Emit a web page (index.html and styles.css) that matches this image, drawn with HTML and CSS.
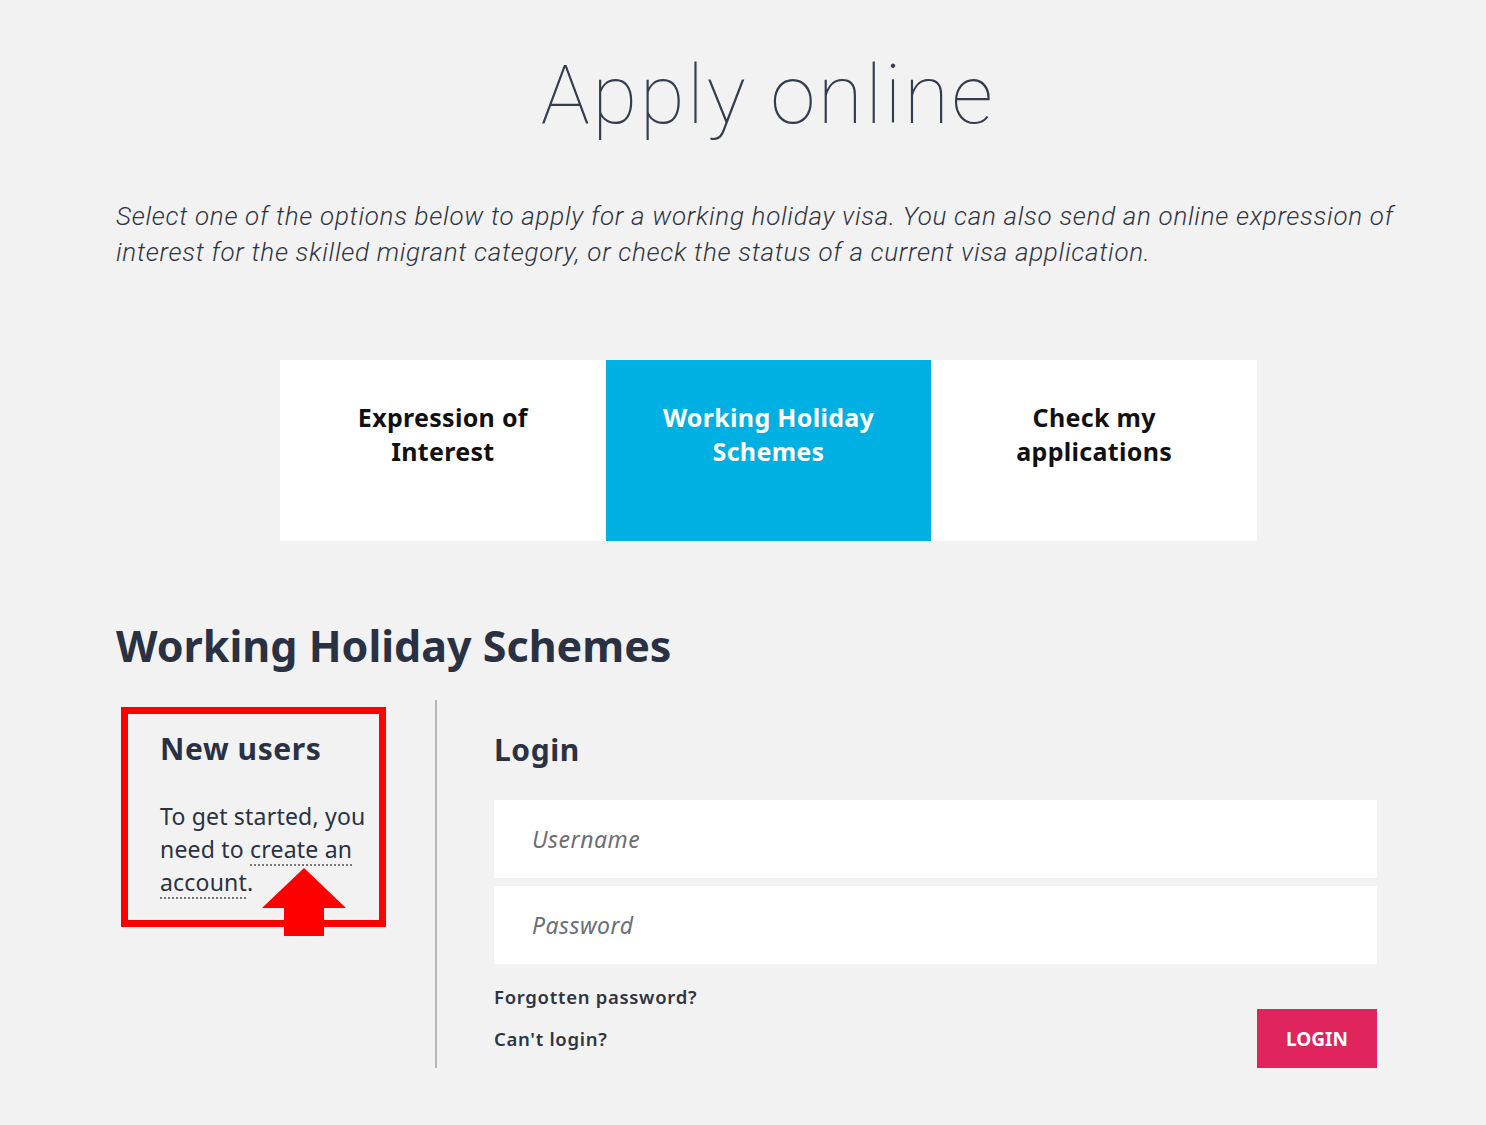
FILE: index.html
```html
<!DOCTYPE html>
<html lang="en">
<head>
<meta charset="utf-8">
<title>Apply online</title>
<link rel="stylesheet" href="styles.css">
</head>
<body>
<main class="page">
  <h1 class="title">Apply online</h1>
  <p class="intro">Select one of the options below to apply for a working holiday visa. You can also send an online expression of interest for the skilled migrant category, or check the status of a current visa application.</p>

  <nav class="tabs">
    <a class="tab">Expression of<br>Interest</a>
    <a class="tab tab-active">Working Holiday<br>Schemes</a>
    <a class="tab">Check my<br>applications</a>
  </nav>

  <h2 class="section-title">Working Holiday Schemes</h2>

  <section class="panels">
    <div class="new-col">
      <div class="new-box">
        <h3 class="sub sub-new">New users</h3>
        <p class="new-text">To get started, you need to <a class="dotted">create an account</a>.</p>
        <svg class="arrow" width="84" height="70" viewBox="0 0 84 70">
          <polygon points="42,0 84,40 62,40 62,68 22,68 22,40 0,40" fill="#ff0000"/>
        </svg>
      </div>
    </div>
    <div class="divider"></div>
    <div class="login-col">
      <h3 class="sub">Login</h3>
      <div class="field">Username</div>
      <div class="field">Password</div>
      <div class="login-bottom">
        <div class="links">
          <a class="link">Forgotten password?</a>
          <a class="link">Can't login?</a>
        </div>
        <button class="btn">LOGIN</button>
      </div>
    </div>
  </section>
</main>
</body>
</html>
```
FILE: styles.css
```css
html, body {
  margin: 0;
  padding: 0;
  background: #f2f2f2;
}
body {
  font-family: "Noto Sans", "Open Sans", sans-serif;
  color: #2a3142;
}
.page {
  width: 1280px;
  margin-left: 116px;
  padding-top: 40px;
}
.title {
  margin: 0 0 0 -66px;
  width: 1436px;
  text-align: center;
  font-family: "Roboto", sans-serif;
  font-weight: 100;
  font-size: 82px;
  line-height: 110px;
  color: #343c4e;
  letter-spacing: 2.5px;
}
.intro {
  margin: 48px 0 0 0;
  font-family: "Roboto", sans-serif;
  font-style: italic;
  font-weight: 300;
  font-size: 26px;
  line-height: 36px;
  letter-spacing: 0.7px;
  color: #2f3442;
  width: 1290px;
}
.tabs {
  display: flex;
  margin: 90px 0 0 164px;
  width: 977px;
  height: 181px;
}
.tab {
  flex: 1;
  background: #ffffff;
  text-align: center;
  font-weight: 700;
  font-size: 25px;
  line-height: 34px;
  letter-spacing: 0.3px;
  color: #111111;
  padding-top: 40px;
  box-sizing: border-box;
}
.tab-active {
  background: #00b0e2;
  color: #ffffff;
}
.section-title {
  margin: 79px 0 0 0;
  font-size: 43px;
  line-height: 52px;
  letter-spacing: 0;
  font-weight: 700;
  color: #2a3142;
}
.panels {
  display: flex;
  margin-top: 28px;
  height: 368px;
}
.new-col {
  width: 319px;
  padding-left: 5px;
  padding-top: 7px;
  box-sizing: border-box;
}
.new-box {
  position: relative;
  width: 265px;
  height: 220px;
  border: 7px solid #ff0000;
  box-sizing: border-box;
  padding: 15px 0 0 32px;
}
.sub {
  margin: 0;
  font-size: 30px;
  line-height: 40px;
  letter-spacing: 0.6px;
  font-weight: 700;
  color: #2a3142;
}
.new-text {
  margin: 31px 0 0 0;
  font-size: 23px;
  line-height: 33px;
  letter-spacing: 0.2px;
  color: #2a3142;
  width: 215px;
}
.dotted {
  text-decoration: underline dotted #777;
  text-decoration-thickness: 2px;
  text-underline-offset: 6px;
}
.arrow {
  position: absolute;
  left: 134px;
  top: 154px;
}
.divider {
  width: 2px;
  background: #b5b5b5;
  height: 368px;
}
.login-col {
  flex: 1;
  padding-left: 57px;
  padding-right: 19px;
  padding-top: 30px;
}
.field {
  margin-top: 8px;
  height: 78px;
  background: #ffffff;
  padding-left: 38px;
  font-style: italic;
  font-size: 23px;
  line-height: 78px;
  letter-spacing: 0.5px;
  color: #6b6e76;
}
.login-col .sub + .field {
  margin-top: 30px;
}
.login-bottom {
  display: flex;
  justify-content: space-between;
  margin-top: 20px;
}
.links {
  display: flex;
  flex-direction: column;
  gap: 17px;
}
.link {
  font-size: 18.5px;
  line-height: 25px;
  letter-spacing: 0.7px;
  font-weight: 600;
  color: #2f3442;
}
.btn {
  margin-top: 25px;
  width: 120px;
  height: 60px;
  border: 0;
  background: #e0245e;
  color: #ffffff;
  font-family: "Noto Sans", sans-serif;
  font-weight: 700;
  font-size: 19px;
  padding: 0;
}
```
